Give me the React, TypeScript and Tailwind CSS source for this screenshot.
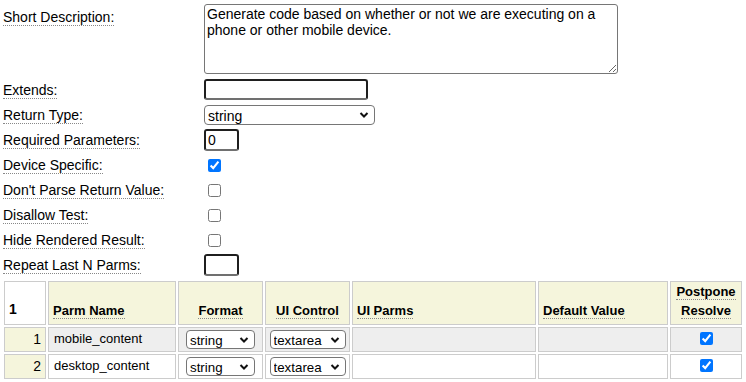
import type { ReactNode } from "react";

const font = { fontFamily: '"Liberation Sans", Arial, sans-serif' };

function Lbl({ children }: { children: ReactNode }) {
  return (
    <span className="border-b border-dotted border-[#888] leading-[15px]">{children}</span>
  );
}

function Chevron() {
  return (
    <svg
      className="pointer-events-none absolute right-[6px] top-1/2 -translate-y-1/2"
      width="10"
      height="7"
      viewBox="0 0 10 7"
    >
      <path d="M1.5 1.5 L5 5 L8.5 1.5" fill="none" stroke="#111" strokeWidth="2" />
    </svg>
  );
}

function Select({
  value,
  w,
  h = "h-[20px]",
  size = "text-[13.33px]",
}: {
  value: string;
  w: string;
  h?: string;
  size?: string;
}) {
  return (
    <div className={`relative ${w} ${h}`}>
      <select
        defaultValue={value}
        className={`h-full w-full appearance-none rounded-[4px] border border-[#767676] bg-white pl-[3px] ${size} text-black outline-none`}
      >
        <option>{value}</option>
      </select>
      <Chevron />
    </div>
  );
}

function Check({ checked = false }: { checked?: boolean }) {
  return (
    <input
      type="checkbox"
      defaultChecked={checked}
      className="mt-[2px] ml-[4px] h-[13px] w-[13px]"
    />
  );
}

function Row({ label, children }: { label: string; children: ReactNode }) {
  return (
    <div className="flex h-[25px] items-center">
      <div className="w-[204px] pl-[3px] pt-[1px]">
        <Lbl>{label}</Lbl>
      </div>
      <div className="flex items-center">{children}</div>
    </div>
  );
}

const darkInput =
  "rounded-[3px] border-2 border-[#1f1f1f] border-b-[#707070] bg-white px-[2px] text-[14px] text-black outline-none";

export default function App() {
  return (
    <div className="w-[746px] bg-white pt-[2px] text-[14px] text-black" style={font}>
      <div className="flex h-[75px] items-start">
        <div className="w-[204px] pl-[3px] pt-[5px]">
          <Lbl>Short Description:</Lbl>
        </div>
        <textarea
          defaultValue="Generate code based on whether or not we are executing on a phone or other mobile device."
          className="mt-[2px] h-[70px] w-[414px] rounded-[3px] border border-[#767676] bg-white px-[2px] py-[1px] text-[14px] leading-[16px] text-black outline-none"
        />
      </div>
      <Row label="Extends:">
        <input className={`h-[21px] w-[164px] ${darkInput}`} defaultValue="" />
      </Row>
      <Row label="Return Type:">
        <Select value="string" w="w-[171px]" size="text-[14px]" />
      </Row>
      <Row label="Required Parameters:">
        <input className={`h-[22px] w-[35px] ${darkInput}`} defaultValue="0" />
      </Row>
      <Row label="Device Specific:">
        <Check checked />
      </Row>
      <Row label="Don't Parse Return Value:">
        <Check />
      </Row>
      <Row label="Disallow Test:">
        <Check />
      </Row>
      <Row label="Hide Rendered Result:">
        <Check />
      </Row>
      <Row label="Repeat Last N Parms:">
        <input className={`h-[22px] w-[35px] ${darkInput}`} defaultValue="" />
      </Row>

      <table className="mt-[2px] ml-[2px] border-separate border-spacing-[2px] text-[13px]">
        <thead>
          <tr className="h-[43px] align-bottom font-bold">
            <th className="w-[42px] border border-[#cccccc] bg-white pb-[4px] pl-[4px] text-left text-[14px]">
              1
            </th>
            <th className="w-[128px] border border-[#cccccc] bg-[#f5f5dc] pb-[4px] pl-[4px] text-left">
              <Lbl>Parm Name</Lbl>
            </th>
            <th className="w-[85px] border border-[#cccccc] bg-[#f5f5dc] pb-[4px] text-center">
              <Lbl>Format</Lbl>
            </th>
            <th className="w-[85px] border border-[#cccccc] bg-[#f5f5dc] pb-[4px] text-center">
              <Lbl>UI Control</Lbl>
            </th>
            <th className="w-[184px] border border-[#cccccc] bg-[#f5f5dc] pb-[4px] pl-[4px] text-left">
              <Lbl>UI Parms</Lbl>
            </th>
            <th className="w-[130px] border border-[#cccccc] bg-[#f5f5dc] pb-[4px] pl-[4px] text-left">
              <Lbl>Default Value</Lbl>
            </th>
            <th className="w-[72px] border border-[#cccccc] bg-[#f5f5dc] pb-[4px] text-center leading-[19px]">
              <Lbl>Postpone</Lbl>
              <br />
              <Lbl>Resolve</Lbl>
            </th>
          </tr>
        </thead>
        <tbody>
          {[
            { n: 1, name: "mobile_content", bg: "bg-[#eeeeee]" },
            { n: 2, name: "desktop_content", bg: "bg-white" },
          ].map((r) => (
            <tr key={r.n} className="h-[25px]">
              <td className="border border-[#cccccc] bg-[#f5f5dc] pr-[4px] text-right text-[14px]">
                {r.n}
              </td>
              <td className={`border border-[#cccccc] ${r.bg} pl-[5px] pb-[2px]`}>{r.name}</td>
              <td className={`border border-[#cccccc] ${r.bg}`}>
                <div className="flex justify-center">
                  <Select value="string" w="w-[69px]" h="h-[19px]" />
                </div>
              </td>
              <td className={`border border-[#cccccc] ${r.bg}`}>
                <div className="flex justify-center">
                  <Select value="textarea" w="w-[76px]" h="h-[19px]" />
                </div>
              </td>
              <td className={`border border-[#cccccc] ${r.bg}`} />
              <td className={`border border-[#cccccc] ${r.bg}`} />
              <td className={`border border-[#cccccc] ${r.bg} text-center`}>
                <input type="checkbox" defaultChecked className="mt-[3px] h-[13px] w-[13px]" />
              </td>
            </tr>
          ))}
        </tbody>
      </table>
    </div>
  );
}
